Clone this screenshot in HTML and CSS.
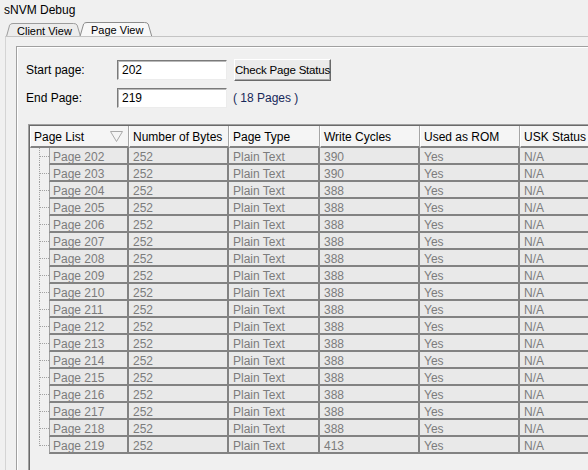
FILE: index.html
```
<!DOCTYPE html>
<html>
<head>
<meta charset="utf-8">
<title>sNVM Debug</title>
<link rel="stylesheet" href="styles.css">
</head>
<body>
<div class="title">sNVM Debug</div>
<div class="tabs">
  <div class="tab tab-client">
    <svg class="tab-shape" viewBox="0 0 75 15" preserveAspectRatio="none"><path d="M0.5 15.5 L3.6 4.2 Q4.4 2.5 7 2.5 L67.5 2.5 Q70.3 2.5 71.2 4.2 L74.5 15.5" fill="#ececec" stroke="#9c9c9c"/></svg>
    <span class="tab-label">Client View</span>
  </div>
  <div class="tab tab-page">
    <svg class="tab-shape" viewBox="0 0 74 15" preserveAspectRatio="none"><path d="M1 15.5 L4.6 3 Q5.4 1.5 8 1.5 L65.5 1.5 Q68.3 1.5 69.2 3 L72.8 15.5" fill="#f8f8f8" stroke="#8c8c8c"/></svg>
    <span class="tab-label">Page View</span>
  </div>
</div>
<div class="panel">
  <div class="group">
    <div class="form">
      <div class="form-row row-first">
        <span class="label">Start page:</span>
        <div class="input">202</div>
        <button class="btn">Check Page Status</button>
      </div>
      <div class="form-row">
        <span class="label">End Page:</span>
        <div class="input">219</div>
        <span class="count">( 18 Pages )</span>
      </div>
    </div>
    <div class="frame">
      <div class="frame-inner">
        <table class="grid">
          <colgroup>
            <col class="c1"><col class="c2"><col class="c3"><col class="c4"><col class="c5"><col class="c6">
          </colgroup>
          <thead>
            <tr>
              <th><div class="th-sort"><span>Page List</span><svg class="sort" width="13" height="11" viewBox="0 0 13 11"><path d="M0.5 0.5 L12.5 0.5 L6.5 10.5 Z" fill="none" stroke="#a9a9a9"/></svg></div></th>
              <th>Number of Bytes</th>
              <th>Page Type</th>
              <th>Write Cycles</th>
              <th>Used as ROM</th>
              <th>USK Status</th>
            </tr>
          </thead>
          <tbody id="rows"></tbody>
        </table>
      </div>
    </div>
  </div>
</div>
<script>
(function () {
  var cycles = {202: 390, 203: 390, 219: 413};
  var body = document.getElementById('rows');
  var html = '';
  for (var p = 202; p <= 219; p++) {
    var last = p === 219 ? ' tree-last' : '';
    html += '<tr><td class="pcell"><div class="pwrap"><span class="tree' + last + '"></span><span class="pg">Page ' + p + '</span></div></td>' +
      '<td>252</td><td>Plain Text</td><td>' + (cycles[p] || 388) + '</td><td>Yes</td><td>N/A</td></tr>';
  }
  body.innerHTML = html;
})();
</script>
</body>
</html>
```
FILE: styles.css
```
* { box-sizing: border-box; }
html, body { margin: 0; padding: 0; }
body {
  width: 588px;
  height: 470px;
  overflow: hidden;
  background: #f0f0f0;
  font-family: "Liberation Sans", Arial, sans-serif;
  font-size: 12px;
  color: #000;
  display: flex;
  flex-direction: column;
}
.title {
  padding: 3px 0 0 4px;
  height: 21px;
  line-height: 14px;
}
.tabs {
  display: flex;
  padding-left: 6px;
  height: 15px;
}
.tab {
  position: relative;
  height: 15px;
  display: flex;
  align-items: center;
}
.tab-shape {
  position: absolute;
  left: 0; top: 0;
  width: 100%;
  height: 100%;
}
.tab-label { position: relative; line-height: 12px; white-space: nowrap; font-size: 11px; }
.tab-client { width: 75px; padding: 4px 0 0 11px; }
.tab-page { width: 74px; margin-left: -2px; padding: 2px 0 0 12px; }
.panel {
  flex: 1;
  min-height: 0;
  margin-left: 5px;
  border-top: 1px solid #c4c4c4;
  border-left: 1px solid #d4d4d4;
  padding: 9px 0 0 10px;
  display: flex;
  flex-direction: column;
}
.group {
  flex: 1;
  min-height: 0;
  border-top: 1px solid #a0a0a0;
  border-left: 1px solid #a0a0a0;
  box-shadow: inset 1px 1px 0 #ffffff;
  padding: 12px 0 0 9px;
  display: flex;
  flex-direction: column;
}
.form {
  display: flex;
  flex-direction: column;
  gap: 7px;
}
.form-row {
  display: flex;
  align-items: center;
  height: 20px;
}
.row-first { height: 22px; }
.label { width: 91px; }
.input {
  width: 110px;
  height: 20px;
  background: #fff;
  border: 1px solid;
  border-color: #7a7a7a #ececec #ececec #7a7a7a;
  box-shadow: inset 1px 1px 0 #b9b9b9;
  padding: 0 0 0 4px;
  line-height: 18px;
}
.btn {
  margin-left: 7px;
  width: 97px;
  height: 22px;
  padding: 0;
  font-family: inherit;
  font-size: 11.5px;
  letter-spacing: -0.2px;
  color: #000;
  white-space: nowrap;
  background: #ebebeb;
  border: 1px solid;
  border-color: #ffffff #6a6a6a #6a6a6a #ffffff;
  box-shadow: inset -1px -1px 0 #a8a8a8;
}
.count { margin-left: 6px; color: #17285a; }
.frame {
  flex: 1;
  min-height: 0;
  margin: 16px 0 0 2px;
  border-top: 1px solid #a0a0a0;
  border-left: 1px solid #a0a0a0;
  display: flex;
  flex-direction: column;
}
.frame-inner {
  flex: 1;
  min-height: 0;
  overflow: hidden;
  border-top: 1px solid #6a6a6a;
  border-left: 1px solid #6a6a6a;
}
.grid {
  table-layout: fixed;
  border-collapse: separate;
  border-spacing: 0;
  width: 590px;
}
.c1 { width: 99px; }
.c2 { width: 100px; }
.c3 { width: 91px; }
.c4 { width: 100px; }
.c5 { width: 100px; }
.c6 { width: 100px; }
.grid thead tr { height: 22px; }
.grid th {
  text-align: left;
  font-weight: normal;
  background: #f5f5f5;
  border-left: 1px solid #ffffff;
  border-right: 1px solid #a6a6a6;
  border-bottom: 2px solid #828282;
  padding: 2px 0 0 3px;
  vertical-align: middle;
  white-space: nowrap;
  overflow: hidden;
}
.th-sort {
  display: flex;
  align-items: center;
  justify-content: space-between;
  padding-right: 5px;
}
.sort { display: block; margin-top: -1px; }
.grid tbody tr { height: 17px; }
.grid td {
  height: 17px;
  padding: 4px 0 0 4px;
  line-height: 11px;
  vertical-align: top;
  color: #7c7c7c;
  background: #e9e9e9;
  border-right: 2px solid #828282;
  border-bottom: 2px solid #828282;
  white-space: nowrap;
  overflow: hidden;
}
.grid td.pcell {
  padding: 0;
  background: transparent;
  border: 0;
}
.pwrap { display: flex; height: 17px; }
.tree {
  width: 19px;
  flex: none;
  background-image:
    repeating-linear-gradient(to bottom, #a0a0a0 0 1px, transparent 1px 2px),
    repeating-linear-gradient(to right, #a0a0a0 0 1px, transparent 1px 2px);
  background-size: 1px 17px, 9px 1px;
  background-position: 9px 0, 10px 8px;
  background-repeat: no-repeat;
}
.tree-last { background-size: 1px 9px, 9px 1px; }
.pg {
  flex: 1;
  height: 17px;
  background: #e9e9e9;
  border-left: 1px solid #a0a0a0;
  border-right: 2px solid #828282;
  border-bottom: 2px solid #828282;
  padding: 4px 0 0 3px;
  line-height: 11px;
  color: #7c7c7c;
  white-space: nowrap;
  overflow: hidden;
}
```
